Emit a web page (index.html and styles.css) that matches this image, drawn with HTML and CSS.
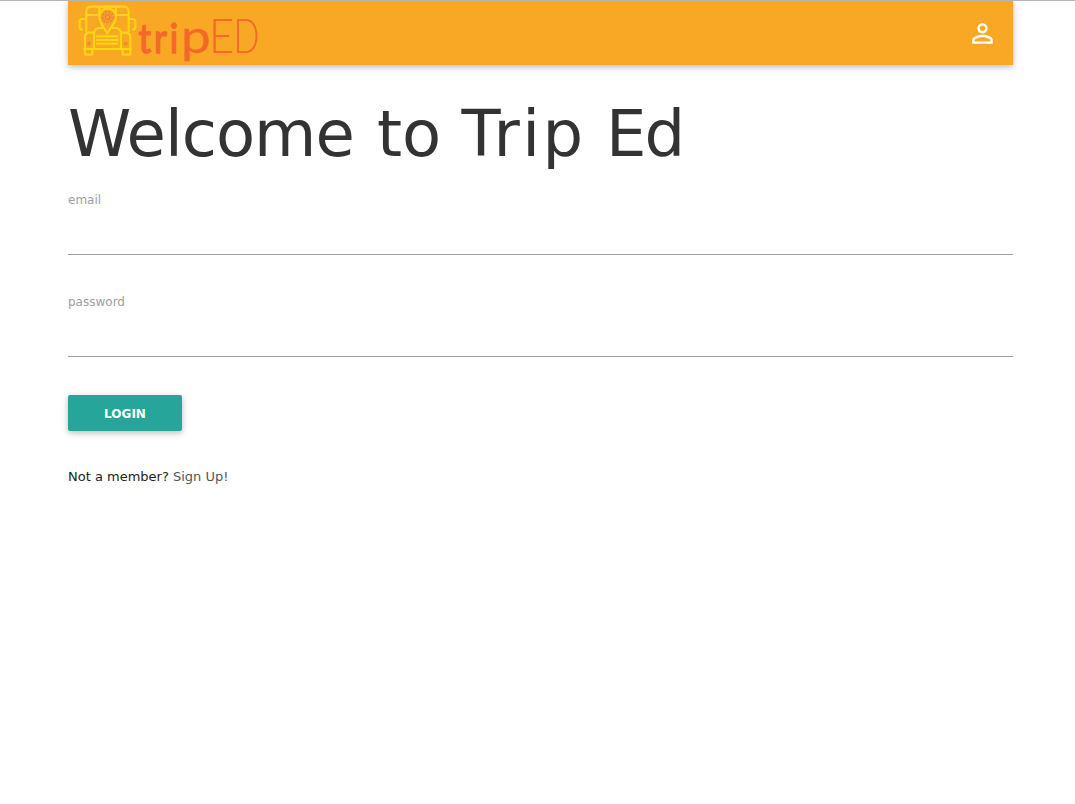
FILE: index.html
```html
<!DOCTYPE html>
<html lang="en">
<head>
<meta charset="utf-8">
<title>Trip Ed</title>
<link rel="stylesheet" href="styles.css">
</head>
<body>
<div class="container">
  <nav class="navbar">
    <svg class="logo" viewBox="68 1 200 64" role="img" aria-label="tripED">
      <g transform="translate(60 0) scale(.33333)" class="bus">
        <path d="M79 97V34Q80 20 94 20H191Q205 20 206 34V97M79 45H116M168 45H206M118 21V45M168 21V45"/>
        <path d="M79 57H67Q59 57 59 65V82Q59 89 68 89M206 57H218Q226 57 226 65V82Q226 89 217 89"/>
        <path d="M102 147V98Q104 84 120 84H165Q181 84 183 98V147M102 98H88Q75 99 75 112V147M183 98H198Q211 99 211 112V147M70 147H215M75 148V164H97V148M188 148V164H211V148"/>
        <path d="M108 109H175M108 120H175M108 131H175"/>
        <path class="pin" d="M142 100C132 82 118 69 118 50A25 25 0 0 1 168 50C168 69 152 82 142 100Z"/>
        <circle class="gear" cx="143" cy="51" r="15"/>
        <circle class="gear-core" cx="143" cy="51" r="7"/>
        <circle class="lamp" cx="87" cy="131" r="6"/>
        <circle class="lamp" cx="197" cy="131" r="6"/>
      </g>
      <text class="trip small" transform="translate(138.6 53) scale(.86 1)" x="0 18 36.3">tri</text>
      <text class="trip" transform="translate(180.9 53.3) scale(1.13 1)">p</text>
      <text class="ed" transform="translate(209 53.3) scale(.9 1)">E</text>
      <text class="ed" transform="translate(233.6 53.3) scale(.71 1)">D</text>
    </svg>
    <svg class="person" viewBox="0 0 24 24" aria-label="Account"><path d="M12 5.9a2.1 2.1 0 1 1 0 4.2 2.1 2.1 0 0 1 0-4.2m0 9c2.97 0 6.1 1.46 6.1 2.1v1.1H5.9V17c0-.64 3.13-2.1 6.1-2.1M12 4C9.79 4 8 5.79 8 8s1.79 4 4 4 4-1.79 4-4-1.79-4-4-4zm0 9c-2.67 0-8 1.34-8 4v3h16v-3c0-2.66-5.33-4-8-4z"/></svg>
  </nav>
  <h1 class="title"><span class="w1">Welcome</span> <span class="w2">to</span> <span class="w3">Trip</span> <span class="w4">Ed</span></h1>
  <form class="form">
    <label class="label" for="email">email</label>
    <input class="field" id="email" type="email">
    <label class="label" for="password">password</label>
    <input class="field" id="password" type="password">
    <button class="login" type="button">LOGIN</button>
  </form>
  <p class="signup">Not a member? <a class="link">Sign Up!</a></p>
</div>
</body>
</html>
```
FILE: styles.css
```css
* { box-sizing: border-box; }
body {
  margin: 0;
  border-top: 1px solid #b4b4b4;
  background: #fff;
  color: #212121;
  font-family: Verdana, "DejaVu Sans", sans-serif;
  font-size: 13px;
}
.container { width: 945px; margin-left: 68px; }
.navbar {
  display: flex;
  align-items: center;
  justify-content: space-between;
  height: 64px;
  padding-right: 15px;
  background: #f9a825;
  box-shadow: 0 2px 5px 0 rgba(0,0,0,.16), 0 2px 10px 0 rgba(0,0,0,.12);
}
.logo { width: 200px; height: 64px; }
.bus { fill: none; stroke: #fdd515; stroke-width: 6.5; stroke-linejoin: round; }
.bus .pin { fill: #f9a825; }
.bus .gear { stroke: #f18a38; stroke-width: 8; stroke-dasharray: 7 3; }
.bus .gear-core { stroke: #f47b30; stroke-width: 4; }
.bus .lamp { fill: #f08b26; stroke: none; }
.trip { font: 400 47px Lato, sans-serif; fill: #f4692a; stroke: #f4692a; stroke-width: .3; }
.trip.small { font-size: 41px; stroke-width: 1.5; }
.ed { font: 300 48px Lato, sans-serif; fill: #f4692a; }
.person { width: 31px; height: 31px; fill: #fff; }
.title {
  display: grid;
  grid-template-columns: 309px 84.5px 144.5px auto;
  margin: 34px 0 0;
  height: 92px;
  color: #333;
  font-size: 64px;
  font-weight: 400;
  line-height: 71px;
  white-space: nowrap;
}
.w1 { letter-spacing: -1px; }
.w3 { letter-spacing: 2.4px; }
.w4 { letter-spacing: -2px; }
.form { display: flex; flex-direction: column; align-items: flex-start; }
.label { height: 18px; color: #9e9e9e; font-size: 12px; line-height: 18px; }
.field {
  width: 100%;
  height: 46px;
  margin: 0 0 38px;
  padding: 0;
  border: 0;
  border-bottom: 1px solid #9e9e9e;
  background: transparent;
  outline: none;
}
.login {
  width: 114px;
  height: 36px;
  border: 0;
  border-radius: 2px;
  background: #26a69a;
  color: #fff;
  font: 700 12px/36px Verdana, "DejaVu Sans", sans-serif;
  box-shadow: 0 2px 5px 0 rgba(0,0,0,.16), 0 2px 10px 0 rgba(0,0,0,.12);
}
.signup { margin: 36px 0 0; line-height: 20px; }
.link { color: #555; }
```
